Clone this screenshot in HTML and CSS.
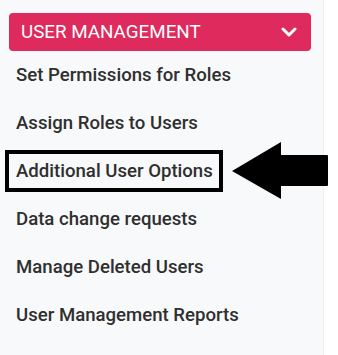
FILE: index.html
```html
<!DOCTYPE html>
<html lang="en">
  <head>
    <link rel="stylesheet" href="styles.css">
    <title>User Management</title>
  </head>
  <body>
    <div class="sidebar">
      <div class="section-head">
        <span>USER MANAGEMENT</span>
        <svg class="chevron" width="16" height="10" viewBox="0 0 16 10">
          <path d="M2 2 L8 8 L14 2" fill="none" stroke="#fff" stroke-width="3" stroke-linecap="round" stroke-linejoin="round" />
        </svg>
      </div>
      <ul class="menu">
        <li>Set Permissions for Roles</li>
        <li>Assign Roles to Users</li>
        <li><span class="marked">Additional User Options</span></li>
        <li>Data change requests</li>
        <li>Manage Deleted Users</li>
        <li>User Management Reports</li>
      </ul>
    </div>
    <svg class="pointer" width="100" height="60" viewBox="0 0 100 60">
      <path d="M0 29 L49 0 L49 13 L95 13 Q96 13 96 14 L96 43 Q96 44 95 44 L49 44 L49 57 Z" fill="#000" />
    </svg>
  </body>
</html>
```
FILE: styles.css
```css
body {
  margin: 0;
  background: #fff;
  font-family: Roboto, "Liberation Sans", sans-serif;
}
.sidebar {
  width: 324px;
  height: 355px;
  background: #f8f9fa;
  border-right: 1px solid #eceef1;
  padding-top: 13px;
  box-sizing: border-box;
}
.section-head {
  display: flex;
  align-items: center;
  justify-content: space-between;
  height: 38px;
  margin: 0 12px 0 9px;
  padding: 0 14px 0 12px;
  background: #de2a5d;
  border-radius: 4px;
  color: #fff;
  font-size: 18.8px;
}
.chevron {
  display: block;
}
.menu {
  list-style: none;
  margin: 0;
  padding: 0;
}
.menu li {
  height: 48px;
  display: flex;
  align-items: center;
  padding-left: 16px;
  color: #2f2f2f;
  font-size: 18.6px;
  font-weight: 500;
}
.marked {
  border: 4px solid #000;
  padding: 6px 6px 6px 7px;
  margin-left: -11px;
  line-height: 22px;
}
.pointer {
  position: absolute;
  left: 232px;
  top: 142px;
}
```
